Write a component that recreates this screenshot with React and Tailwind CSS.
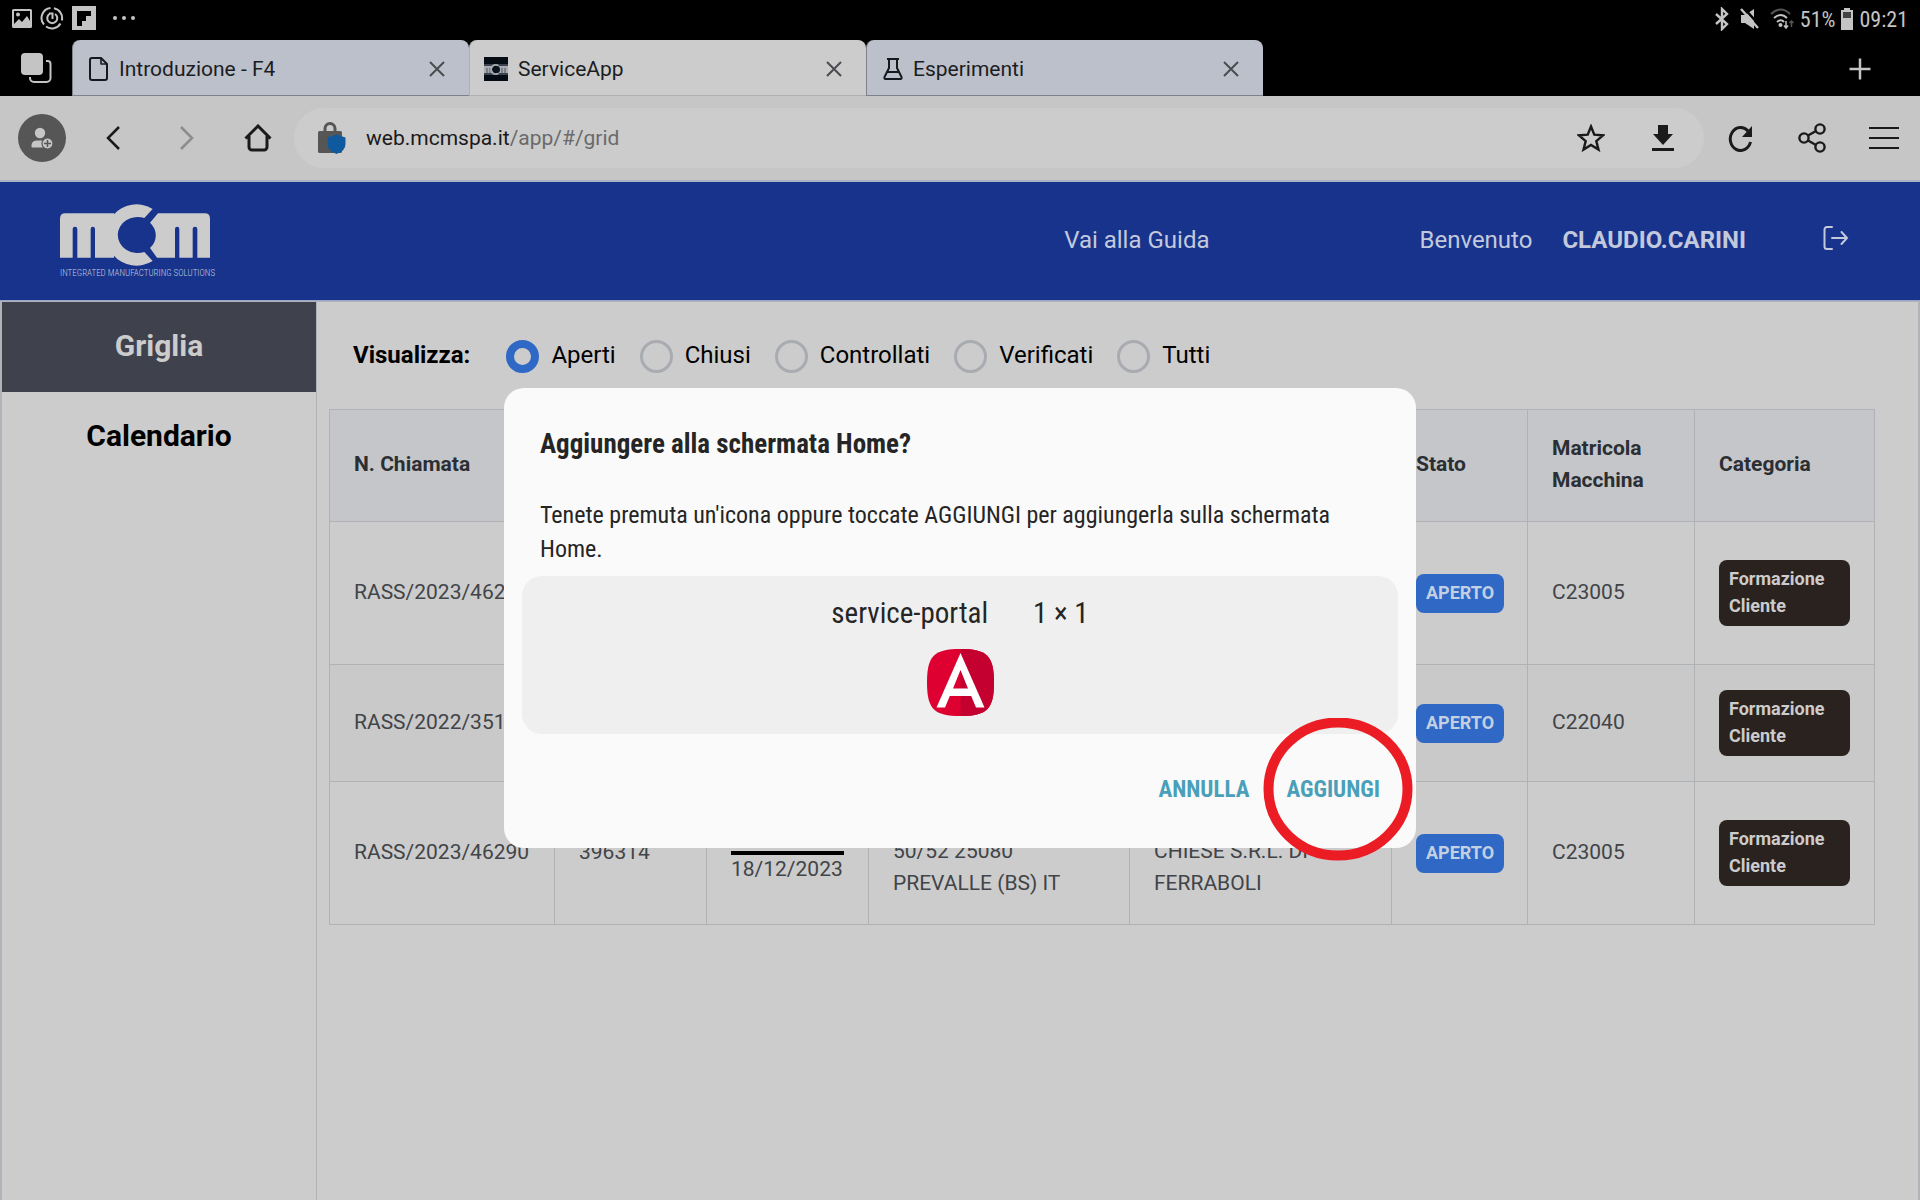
import React from "react";

const tabs = [
  { label: "Introduzione - F4", icon: "file", active: false },
  { label: "ServiceApp", icon: "app", active: true },
  { label: "Esperimenti", icon: "flask", active: false },
];

const filters = ["Aperti", "Chiusi", "Controllati", "Verificati", "Tutti"];

const rows = [
  { id: "RASS/2023/46290", height: "h-[143px]", serial: "C23005" },
  { id: "RASS/2022/35102", height: "h-[117px]", serial: "C22040" },
  {
    id: "RASS/2023/46290",
    height: "h-[143px]",
    serial: "C23005",
    order: "396314",
    date: "18/12/2023",
    address: ["50/52 25080", "PREVALLE (BS) IT"],
    customer: ["CHIESE S.R.L. DI", "FERRABOLI"],
  },
];

function TabIcon({ name }) {
  if (name === "file")
    return (
      <svg className="h-6 w-5 shrink-0" viewBox="0 0 20 24" fill="none" stroke="#16181d" strokeWidth="2" strokeLinejoin="round">
        <path d="M3 1h9l6 6v14a2 2 0 0 1-2 2H3a2 2 0 0 1-2-2V3a2 2 0 0 1 2-2z" />
        <path d="M12 1v6h6" strokeWidth="1.6" />
      </svg>
    );
  if (name === "flask")
    return (
      <svg className="h-6 w-5 shrink-0" viewBox="0 0 20 24" fill="none" stroke="#16181d" strokeWidth="2" strokeLinejoin="round">
        <path d="M4 2h12M6 2v9L1.500 20q-.6 2 1.200 2h14.600q1.800 0 1.200-2L14 11V2M5 15h10" />
      </svg>
    );
  return (
    <svg className="h-6 w-6 shrink-0" viewBox="0 0 24 24">
      <rect width="24" height="24" fill="#050c14" />
      <rect y="7" width="24" height="11" fill="#3a4450" />
      <rect y="9" width="24" height="7" fill="#a9adb1" />
      <path d="M3 11v5M6 11v5M18 11v5M21 11v5" stroke="#4c5560" />
      <path d="M14.500 9A4.500 4.500 0 1 0 14.500 16" fill="#0a1420" stroke="#a9adb1" strokeWidth="2" />
      <circle cx="12.500" cy="12.500" r="3.500" fill="#0a1420" />
    </svg>
  );
}

function StatusBar() {
  return (
    <div className="flex h-10 items-center justify-between px-3 pb-0.5 text-[#c4c4c4]">
      <div className="flex items-center gap-2 pb-0.5">
        <svg className="h-6 w-5" viewBox="0 0 20 24">
          <path fillRule="evenodd" fill="currentColor" d="M1.500 3h17a1.500 1.500 0 0 1 1.500 1.500v16a1.500 1.500 0 0 1-1.500 1.500h-17A1.500 1.500 0 0 1 0 20.500v-16A1.500 1.500 0 0 1 1.500 3zM2 5v13l5-5 3 3 5-6 3 5V5z" />
          <circle cx="6" cy="8.500" r="2" fill="currentColor" />
        </svg>
        <svg className="h-6 w-6" viewBox="0 0 24 24" fill="none" stroke="currentColor" strokeWidth="2">
          <path d="M10.500 2A10 10 0 0 0 4 18.500M6 20.500a10 10 0 0 0 14.500-3M21.800 14.500A10 10 0 0 0 14 2.200" />
          <path d="M9.500 8a5 5 0 1 0 5.500 0M9 7.500h3.500V13" />
        </svg>
        <svg className="h-6 w-6" viewBox="0 0 24 24">
          <rect width="24" height="24" fill="currentColor" />
          <path d="M5 5h14v5h-5v5h-4v5H5z" fill="#000" />
        </svg>
        <svg className="ml-2 h-6 w-6" viewBox="0 0 24 24" fill="currentColor">
          <circle cx="3" cy="12" r="2" />
          <circle cx="12" cy="12" r="2" />
          <circle cx="21" cy="12" r="2" />
        </svg>
      </div>
      <div className="flex items-center gap-1.5 font-['Roboto_Condensed',Roboto,sans-serif] text-[22px]">
        <svg className="mr-1 h-6 w-4" viewBox="0 0 16 24" fill="none" stroke="currentColor" strokeWidth="2.400">
          <path d="M2 7l11 10-5 5V2l5 5L2 17" />
        </svg>
        <svg className="mr-1 h-6 w-5" viewBox="0 0 20 24">
          <path d="M1 8h4l9-6v20l-9-6H1z" fill="currentColor" />
          <path d="M3 0l18 20" stroke="#000" strokeWidth="2.500" />
          <path d="M1 2l17 19" stroke="currentColor" strokeWidth="2.400" />
        </svg>
        <svg className="h-6 w-6" viewBox="0 0 24 24" fill="none" stroke="currentColor" strokeWidth="2">
          <path d="M1 7q10-9 19 0" stroke="#555" />
          <path d="M4 11q7-6 13 0M7 15q4-3.500 7 0" />
          <circle cx="10.500" cy="18" r="1" fill="currentColor" />
          <path d="M16 14v7M14 18.500l2 2.500 2-2.500" strokeWidth="1.500" />
          <path d="M21.500 20v-6M19.500 16l2-2 2 2" stroke="#555" strokeWidth="1.500" />
        </svg>
        <span>51%</span>
        <svg className="h-6 w-3" viewBox="0 0 12 24">
          <path d="M3 1h6v2h3v20H0V3h3z" fill="currentColor" />
          <rect x="2" y="5" width="8" height="6" fill="#444" />
        </svg>
        <span>09:21</span>
      </div>
    </div>
  );
}

function TabStrip() {
  return (
    <div className="flex h-14 items-stretch">
      <button type="button" aria-label="Schede" className="flex w-[72px] shrink-0 items-center justify-center">
        <svg className="h-8 w-8" viewBox="0 0 32 32">
          <path d="M26 9h1.500a3 3 0 0 1 3 3v14a4 4 0 0 1-4 4H14a4 4 0 0 1-4-4v-1" fill="none" stroke="#c4c4c4" strokeWidth="2" />
          <rect x="1" y="1" width="22" height="22" rx="4" fill="#c4c4c4" />
        </svg>
      </button>
      <div className="flex min-w-0">
        {tabs.map((t) => (
          <div
            key={t.label}
            className={
              "flex w-[397px] min-w-0 items-center rounded-t-lg border-b border-l pt-0.5 pr-5 " +
              (t.active ? "border-[#b0b0b0] bg-[#cccccc] pl-3.5" : "border-[#7d828b] bg-[#bcc0ca] pl-4")
            }
          >
            <button type="button" className="flex min-w-0 flex-1 items-center gap-2.5 text-left text-[21px] text-[#1b1d22]">
              <TabIcon name={t.icon} />
              <span className="truncate pt-0.5">{t.label}</span>
            </button>
            <button type="button" aria-label={"Chiudi " + t.label} className="p-1">
              <svg className="h-4 w-4" viewBox="0 0 16 16" stroke="#4a4c50" strokeWidth="2">
                <path d="M1 1l14 14M15 1L1 15" />
              </svg>
            </button>
          </div>
        ))}
      </div>
      <button type="button" aria-label="Nuova scheda" className="mr-[48px] ml-auto flex items-center pt-0.5">
        <svg className="h-6 w-6" viewBox="0 0 24 24" stroke="#c4c4c4" strokeWidth="2.500">
          <path d="M12 1.500v21M1.500 12h21" />
        </svg>
      </button>
    </div>
  );
}

function Toolbar() {
  return (
    <div className="flex h-[86px] items-center border-b-2 border-[#a9b2c4] bg-[#c6c6c6] pr-[21px] pl-[18px]">
      <button type="button" aria-label="Account">
        <svg className="h-12 w-12" viewBox="0 0 48 48">
          <circle cx="24" cy="24" r="24" fill="#565656" />
          <circle cx="22" cy="19" r="5.200" fill="#c6c6c6" />
          <path d="M13.500 33v-1.500q0-5 6-5h7q3 0 5 2v5H16q-2.500 0-2.500-.5z" fill="#c6c6c6" />
          <circle cx="29.500" cy="29.500" r="5.500" fill="#c6c6c6" stroke="#565656" strokeWidth="1.200" />
          <path d="M29.500 26v7M26 29.500h7" stroke="#565656" strokeWidth="1.500" />
        </svg>
      </button>
      <button type="button" aria-label="Indietro" className="ml-[39px]">
        <svg className="h-6 w-4" viewBox="0 0 16 24" fill="none" stroke="#1a1a1a" strokeWidth="2.500">
          <path d="M14 1L3 12l11 11" />
        </svg>
      </button>
      <button type="button" aria-label="Avanti" className="ml-[58px]">
        <svg className="h-6 w-4" viewBox="0 0 16 24" fill="none" stroke="#8c8c8c" strokeWidth="2.500">
          <path d="M2 1l11 11L2 23" />
        </svg>
      </button>
      <button type="button" aria-label="Home" className="ml-[49px]">
        <svg className="h-7 w-7" viewBox="0 0 28 28" fill="none" stroke="#1a1a1a" strokeWidth="3">
          <path d="M1.500 14.500L14 2l12.500 12.500M5 12v11a3 3 0 0 0 3 3h12a3 3 0 0 0 3-3V12" />
        </svg>
      </button>
      <div className="ml-[22px] flex h-[60px] flex-1 items-center rounded-full bg-[#cccccc] pr-[30px] pl-6">
        <svg className="h-8 w-7" viewBox="0 0 28 32">
          <path d="M7 11V6.500a5 5 0 0 1 10 0V11" fill="none" stroke="#565656" strokeWidth="3" />
          <rect y="9" width="24" height="22" rx="1.500" fill="#565656" />
          <path d="M18.500 12.500l9 3v6.500q0 7-9 10-9-3-9-10v-6.500z" fill="#0f5a9f" />
        </svg>
        <a href="#/grid" className="ml-[20px] flex-1 pt-0.5 text-[21px] text-[#6a6a6a]">
          <span className="text-[#1a1a1a]">web.mcmspa.it</span>/app/#/grid
        </a>
        <button type="button" aria-label="Preferiti">
          <svg className="h-7 w-7" viewBox="0 0 28 28" fill="none" stroke="#1a1a1a" strokeWidth="2.400">
            <path d="M14 2.500l3.300 8.200 8.700.7-6.700 5.700 2.200 8.500L14 21l-7.500 4.600 2.200-8.500L2 11.400l8.700-.7z" />
          </svg>
        </button>
        <button type="button" aria-label="Download" className="ml-[47px]">
          <svg className="h-7 w-[22px]" viewBox="0 0 22 28" fill="#1a1a1a">
            <path d="M6 1h10v9h5L11 21 1 10h5zM0 24h22v3H0z" />
          </svg>
        </button>
      </div>
      <button type="button" aria-label="Ricarica" className="ml-[24px]">
        <svg className="h-7 w-6" viewBox="0 0 24 28">
          <path d="M20 7A10.300 11.500 0 1 0 22.500 18" fill="none" stroke="#1a1a1a" strokeWidth="3" />
          <path d="M24 2v11H14z" fill="#1a1a1a" />
        </svg>
      </button>
      <button type="button" aria-label="Condividi" className="ml-[46px]">
        <svg className="h-[30px] w-7" viewBox="0 0 28 30" fill="none" stroke="#1a1a1a" strokeWidth="2.400">
          <circle cx="6" cy="15" r="4.600" />
          <circle cx="22" cy="6" r="4.600" />
          <circle cx="22" cy="24" r="4.600" />
          <path d="M10 12.500l8-4.500M10 17.500l8 4.500" />
        </svg>
      </button>
      <button type="button" aria-label="Menu" className="ml-[43px]">
        <svg className="h-6 w-[30px]" viewBox="0 0 30 24" stroke="#1a1a1a" strokeWidth="2">
          <path d="M0 2h30M0 12h30M0 22h30" />
        </svg>
      </button>
    </div>
  );
}

function Logo() {
  return (
    <a href="#/" aria-label="MCM" className="flex w-[150px] flex-col pt-0.5">
      <svg className="h-[63px] w-[150px]" viewBox="60 40 450 189" fill="#cccccc">
        <path d="M60 201V84q0-16 16-16h146v133h-57v-86q0-7-6.500-7t-6.500 7v86h-40v-86q0-7-7-7t-7 7v86z" />
        <path d="M338 55A92 92 0 1 0 338 211L313 184A60 54 0 1 1 313 82Z" />
        <path d="M354 68h140q16 0 16 16v117h-38v-86q0-7-7-7t-7 7v86h-40v-86q0-7-6.500-7t-6.500 7v86h-54l-21-29A60 54 0 0 0 330 96z" />
      </svg>
      <span className="text-center font-['Roboto_Condensed',Roboto,sans-serif] text-[9px] leading-[12px] font-light whitespace-nowrap text-[#c3c9dc]">
        INTEGRATED MANUFACTURING SOLUTIONS
      </span>
    </a>
  );
}

function AppHeader() {
  return (
    <header className="flex h-[119px] items-center border-b border-[#9aa6c8] bg-[#18338b] pr-[71px] pb-0.5 pl-[60px] text-2xl text-[#c3c9dc]">
      <Logo />
      <a href="#/guida" className="ml-auto">Vai alla Guida</a>
      <span className="ml-[210px]">Benvenuto</span>
      <strong className="ml-[30px] font-bold">CLAUDIO.CARINI</strong>
      <button type="button" aria-label="Esci" className="ml-[77px] pb-1">
        <svg className="h-[26px] w-[26px]" viewBox="0 0 26 26" fill="none" stroke="#c3c9dc" strokeWidth="2" strokeLinecap="round">
          <path d="M9 2H4a2.500 2.500 0 0 0-2.500 2.500v17A2.500 2.500 0 0 0 4 24h5M9 13h15M18.500 7l5.500 6-5.500 6" />
        </svg>
      </button>
    </header>
  );
}

function Sidebar() {
  return (
    <nav className="flex w-[317px] shrink-0 flex-col border-r border-l-2 border-[#b0b3b8] text-center text-[30px] font-bold">
      <a href="#/grid" className="h-[90px] bg-[#3f414c] leading-[88px] text-[#cccccc]">Griglia</a>
      <a href="#/calendar" className="h-[90px] leading-[88px] text-black">Calendario</a>
    </nav>
  );
}

function Filters() {
  return (
    <div role="radiogroup" aria-labelledby="filter-title" className="flex items-center pt-[37px] pl-6 text-2xl text-black">
      <span id="filter-title" className="mr-[36px] pb-0.5 font-bold">Visualizza:</span>
      <div className="flex gap-6">
        {filters.map((f, i) => (
          <label key={f} className="flex items-center gap-3">
            <input
              type="radio"
              name="stato"
              defaultChecked={i === 0}
              className="h-[33px] w-[33px] appearance-none rounded-full border-3 border-[#a8abb0] checked:border-8 checked:border-[#2f68c5]"
            />
            <span className="pb-0.5">{f}</span>
          </label>
        ))}
      </div>
    </div>
  );
}

const cell = "border border-[#b0b3b6] px-6";
const textCell = "border border-[#b0b3b6] px-6 pb-[3px]";
const tallCell = "border border-[#b0b3b6] px-6 pb-[25px] align-bottom";
const badge = "rounded-lg px-2.5 pt-[5px] pb-[7px] text-lg leading-[27px] font-bold";

function Grid() {
  return (
    <table className="mt-[36px] w-full table-fixed border-collapse text-left text-[21px] leading-8 text-[#414448]">
      <colgroup>
        <col className="w-[225px]" />
        <col className="w-[152px]" />
        <col className="w-[162px]" />
        <col className="w-[261px]" />
        <col className="w-[262px]" />
        <col className="w-[136px]" />
        <col className="w-[167px]" />
        <col className="w-[180px]" />
      </colgroup>
      <thead>
        <tr className="h-[112px] bg-[#c5c6c9] text-[#2b2e33]">
          <th className={textCell}>N. Chiamata</th>
          <th className={textCell} />
          <th className={textCell} />
          <th className={textCell} />
          <th className={textCell} />
          <th className={textCell}>Stato</th>
          <th className={textCell}>Matricola Macchina</th>
          <th className={textCell}>Categoria</th>
        </tr>
      </thead>
      <tbody>
        {rows.map((r, i) => (
          <tr key={i} className={r.height + " even:bg-[#c9c9c9]"}>
            <td className={textCell}>{r.id}</td>
            <td className={textCell}>{r.order}</td>
            <td className={cell}>
              {r.date && <div className="mt-7 border-t-4 border-black leading-7">{r.date}</div>}
            </td>
            <td className={tallCell}>
              {r.address?.map((l) => <div key={l} className="whitespace-nowrap">{l}</div>)}
            </td>
            <td className={tallCell}>
              {r.customer?.map((l) => <div key={l} className="whitespace-nowrap">{l}</div>)}
            </td>
            <td className={cell}>
              <div className={badge + " w-fit bg-[#2f68c5] text-[#c3cfe3]"}>APERTO</div>
            </td>
            <td className={textCell}>{r.serial}</td>
            <td className={cell}>
              <div className={badge + " bg-[#2a221f] text-[#cccccc]"}>Formazione Cliente</div>
            </td>
          </tr>
        ))}
      </tbody>
    </table>
  );
}

function HomeDialog() {
  return (
    <div className="absolute inset-0 flex items-center justify-center pt-9">
      <div
        role="dialog"
        aria-labelledby="dialog-title"
        className="w-full max-w-[912px] rounded-[20px] bg-[#fafafa] px-[18px] pt-[38px] pb-[38px] font-['Roboto_Condensed',Roboto,sans-serif] text-[#252525]"
      >
        <h2 id="dialog-title" className="px-[18px] text-[27px] leading-9 font-bold">Aggiungere alla schermata Home?</h2>
        <p className="mt-9 px-[18px] text-2xl leading-[34px]">
          Tenete premuta un'icona oppure toccate AGGIUNGI per aggiungerla sulla schermata Home.
        </p>
        <div className="mt-2.5 flex flex-col items-center rounded-[20px] bg-[#efefef] pt-[17px] pb-[18px]">
          <div className="flex gap-[45px] text-[29px] leading-10">
            <span>service-portal</span>
            <span>1 × 1</span>
          </div>
          <svg className="mt-4 h-[67px] w-[67px]" viewBox="0 0 67 67">
            <path d="M33.500 0C60 0 67 7 67 33.500S60 67 33.500 67 0 60 0 33.500 7 0 33.500 0z" fill="#dd0031" />
            <path d="M33.500 0C60 0 67 7 67 33.500S60 67 33.500 67z" fill="#c3002f" />
            <path fillRule="evenodd" d="M33.500 4L57.500 58.500H49L44.200 47H22.800L18 58.500H9.500zM33.500 21L26 39.500H41z" fill="#fff" />
          </svg>
        </div>
        <div className="mt-9 flex h-10 justify-end gap-[37px] pr-2 text-[23px] font-bold text-[#4a9fb9]">
          <button type="button">ANNULLA</button>
          <button type="button" className="relative pr-2.5">
            AGGIUNGI
            <svg className="absolute top-1/2 left-1/2 h-36 w-[150px] -translate-x-1/2 -translate-y-1/2" viewBox="0 0 150 144">
              <ellipse cx="75" cy="71" rx="69.500" ry="66.500" fill="none" stroke="#ec1c24" strokeWidth="10" />
            </svg>
          </button>
        </div>
      </div>
    </div>
  );
}

export default function App() {
  return (
    <div className="relative flex min-h-screen flex-col overflow-hidden bg-[#cccccc] font-[Roboto,sans-serif]">
      <div className="bg-black">
        <StatusBar />
        <TabStrip />
      </div>
      <Toolbar />
      <AppHeader />
      <div className="flex flex-1 border-t border-r-2 border-[#b0b3b8]">
        <Sidebar />
        <main className="min-w-0 flex-1 pr-[44px] pl-3">
          <Filters />
          <Grid />
        </main>
      </div>
      <HomeDialog />
    </div>
  );
}
